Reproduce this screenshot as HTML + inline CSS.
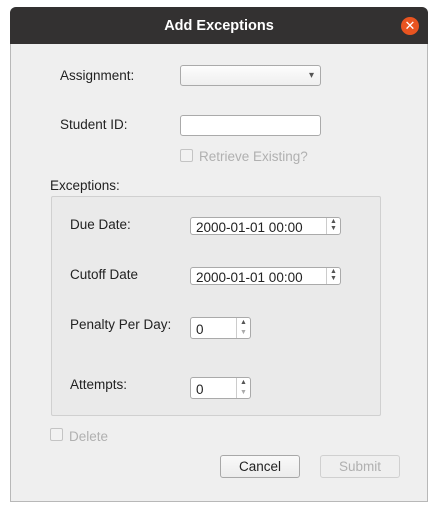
<!DOCTYPE html><html><head><style>
body{margin:0;width:438px;height:513px;background:#fff;font-family:"Liberation Sans",sans-serif;font-size:13.5px;color:#222;position:relative;overflow:hidden}
.a{position:absolute}
.win{left:10px;top:7px;width:418px;height:495px;background:#efefef;border:1px solid #b8b8b8;border-top:none;box-sizing:border-box;border-radius:6px 6px 0 0}
.tb{left:10px;top:7px;width:418px;height:37px;background:#333131;border-radius:6px 6px 0 0;color:#fff;font-weight:bold;font-size:14.5px;text-align:center;line-height:39px}
.close{left:401px;top:17px;width:18px;height:18px;border-radius:50%;background:#e95420;color:#fff;font-size:13px;line-height:18px;text-align:center}
.in{background:#fff;border:1px solid #aaa;border-radius:3px;box-sizing:border-box}
.lbl{line-height:16px}
.dis{color:#b0b0b0}
.cb{width:13px;height:13px;border:1px solid #c4c4c4;border-radius:2px;box-sizing:border-box;background:#f2f2f2}
.spin{border-left:1px solid #ccc;position:absolute;right:0;top:0;bottom:0;width:13px;font-size:7px;color:#555;text-align:center;line-height:7px}
.btn{border:1px solid #a8a8a8;border-radius:3px;background:linear-gradient(#f9f9f9,#ececec);box-sizing:border-box;text-align:center;line-height:21px}
</style></head><body>
<div class="a win"></div>
<div class="a tb">Add Exceptions</div>
<div class="a close">✕</div>
<div class="a lbl" style="left:60px;top:68px">Assignment:</div>
<div class="a in" style="left:180px;top:65px;width:141px;height:21px;background:linear-gradient(#fdfdfd,#efefef)"><span class="a" style="right:6px;top:4px;font-size:10px;color:#555">▾</span></div>
<div class="a lbl" style="left:60px;top:117px">Student ID:</div>
<div class="a in" style="left:180px;top:115px;width:141px;height:21px"></div>
<div class="a cb" style="left:180px;top:149px"></div>
<div class="a lbl dis" style="left:199px;top:149px">Retrieve Existing?</div>
<div class="a lbl" style="left:50px;top:178px">Exceptions:</div>
<div class="a" style="left:51px;top:196px;width:330px;height:220px;background:#eaeaea;border:1px solid #d0d0d0;box-sizing:border-box;border-radius:2px"></div>
<div class="a lbl" style="left:70px;top:217px">Due Date:</div>
<div class="a in" style="left:190px;top:217px;width:151px;height:18px;line-height:19px;padding-left:5px">2000-01-01 00:00<div class="spin">▲<br>▼</div></div>
<div class="a lbl" style="left:70px;top:267px">Cutoff Date</div>
<div class="a in" style="left:190px;top:267px;width:151px;height:18px;line-height:19px;padding-left:5px">2000-01-01 00:00<div class="spin">▲<br>▼</div></div>
<div class="a lbl" style="left:70px;top:317px">Penalty Per Day:</div>
<div class="a in" style="left:190px;top:317px;width:61px;height:22px;line-height:23px;padding-left:5px">0<div class="spin" style="line-height:10px">▲<br><span style="color:#aaa">▼</span></div></div>
<div class="a lbl" style="left:70px;top:377px">Attempts:</div>
<div class="a in" style="left:190px;top:377px;width:61px;height:22px;line-height:23px;padding-left:5px">0<div class="spin" style="line-height:10px">▲<br><span style="color:#aaa">▼</span></div></div>
<div class="a cb" style="left:50px;top:428px"></div>
<div class="a lbl dis" style="left:69px;top:429px">Delete</div>
<div class="a btn" style="left:220px;top:455px;width:80px;height:23px">Cancel</div>
<div class="a btn dis" style="left:320px;top:455px;width:80px;height:23px;border-color:#d0d0d0;background:#efefef">Submit</div>
</body></html>
